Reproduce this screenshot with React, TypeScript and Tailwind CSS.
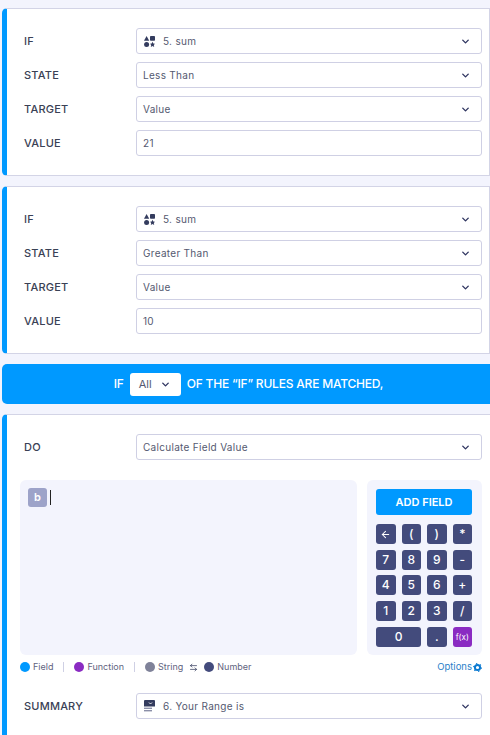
import { ChevronDown, ArrowLeft, ArrowLeftRight } from "lucide-react";

const Chevron = () => <ChevronDown className="w-[11px] h-[11px] text-[#2f3560]" strokeWidth={3} />;

const ShapesIcon = () => (
  <svg width="11" height="11" viewBox="0 0 11 11" className="shrink-0 ml-px" fill="#343c5e">
    <path d="M2.6 0 L5.2 4.8 H0 Z" />
    <rect x="6" y="0" width="5" height="4.8" rx="0.8" />
    <circle cx="2.6" cy="8.4" r="2.5" />
    <path d="M8.5 5.7 L9.3 7.5 L11 7.7 L9.8 9 L10.2 11 L8.5 10 L6.8 11 L7.2 9 L6 7.7 L7.7 7.5 Z" />
  </svg>
);

const SummaryIcon = () => (
  <svg width="11" height="12" viewBox="0 0 11 12" className="shrink-0 ml-px" fill="#343c5e">
    <path d="M1 0 H10 a1 1 0 0 1 1 1 V6.5 H0 V1 a1 1 0 0 1 1 -1 Z" />
    <path d="M5 2.5 L6.5 4 L8 2.5" stroke="#fff" strokeWidth="0.9" fill="none" />
    <rect x="0" y="7.6" width="8" height="1.4" fill="#8b8fa8" />
    <rect x="0" y="10" width="8" height="1.4" fill="#8b8fa8" />
  </svg>
);

const Row = ({ label, value, icon, select = true }: { label: string; value: string; icon?: React.ReactNode; select?: boolean }) => (
  <div className="flex items-center">
    <div className="w-[112px] text-[11px] font-medium text-[#3a4155] tracking-[0.2px]">{label}</div>
    <div className="flex-1 h-[26px] bg-white border border-[#cfd0e4] rounded-[3px] flex items-center justify-between pl-[6px] pr-[10px]">
      <div className="flex items-center gap-[8px] text-[10px] text-[#545970] tracking-[0.3px]">
        {icon}
        <span>{value}</span>
      </div>
      {select && <Chevron />}
    </div>
  </div>
);

const Condition = ({ state, value }: { state: string; value: string }) => (
  <div className="bg-white border-y border-r border-[#d3d4e6] border-l-[5px] border-l-[#0099ff] rounded-l-[5px] pl-[17px] pr-[7px] py-[19px] flex flex-col gap-[8px]">
    <Row label="IF" value="5. sum" icon={<ShapesIcon />} />
    <Row label="STATE" value={state} />
    <Row label="TARGET" value="Value" />
    <Row label="VALUE" value={value} select={false} />
  </div>
);

const Key = ({ children, className = "bg-[#434b7c] text-[12px] font-medium" }: { children: React.ReactNode; className?: string }) => (
  <div className={`h-[20px] rounded-[3px] text-white flex items-center justify-center ${className}`}>
    {children}
  </div>
);

const Legend = ({ color, label }: { color: string; label: string }) => (
  <div className="flex items-center gap-[3px]">
    <span className={`w-[10px] h-[10px] rounded-full ${color}`} />
    <span>{label}</span>
  </div>
);

export default function App() {
  return (
    <div className="w-[490px] h-[735px] overflow-hidden bg-[#f3f4fd] pl-[2px] pt-[8px] flex flex-col gap-[10px]" style={{ fontFamily: "Inter, 'Noto Sans', sans-serif" }}>
      <Condition state="Less Than" value="21" />
      <Condition state="Greater Than" value="10" />

      <div className="shrink-0 h-[40px] bg-[#0099ff] rounded-l-[5px] flex items-center justify-center gap-[6px] pl-[5px] text-white text-[12px] font-medium tracking-[-0.2px]">
        <span>IF</span>
        <div className="w-[51px] h-[23px] bg-white rounded-[3px] flex items-center justify-between pl-[9px] pr-[10px] text-[11px] text-[#545970] font-normal tracking-normal">
          <span>All</span>
          <Chevron />
        </div>
        <span>OF THE “IF” RULES ARE MATCHED,</span>
      </div>

      <div className="shrink-0 bg-white border-t border-[#d3d4e6] border-l-[5px] border-l-[#0099ff] rounded-tl-[5px] pl-[13px] pr-[8px] pt-[19px] h-[340px]">
        <div className="pl-[4px]">
          <Row label="DO" value="Calculate Field Value" />
        </div>

        <div className="flex gap-[10px] mt-[20px]">
          <div className="w-[337px] h-[175px] bg-[#f3f4fd] rounded-[6px] p-[8px] flex items-start gap-[3px]">
            <div className="w-[19px] h-[19px] rounded-[3px] bg-[#9da3c9] text-white text-[11px] font-semibold flex items-center justify-center">b</div>
            <div className="w-px h-[15px] bg-[#222] mt-[2px]" />
          </div>

          <div className="w-[115px] h-[175px] bg-[#f3f4fd] rounded-[6px] pl-[9px] pr-[10px] pt-[9px]">
            <div className="h-[26px] rounded-[3px] bg-[#0099ff] text-white text-[11px] font-semibold flex items-center justify-center">ADD FIELD</div>
            <div className="grid grid-cols-4 gap-x-[6px] gap-y-[5.7px] mt-[9px]">
              <Key><ArrowLeft className="w-[11px] h-[11px]" strokeWidth={2.2} /></Key>
              <Key>(</Key>
              <Key>)</Key>
              <Key>*</Key>
              <Key>7</Key>
              <Key>8</Key>
              <Key>9</Key>
              <Key>-</Key>
              <Key>4</Key>
              <Key>5</Key>
              <Key>6</Key>
              <Key>+</Key>
              <Key>1</Key>
              <Key>2</Key>
              <Key>3</Key>
              <Key>/</Key>
              <Key className="col-span-2 bg-[#434b7c] text-[12px] font-medium">0</Key>
              <Key>.</Key>
              <Key className="bg-[#8a2bc2] text-[8px] font-normal">f(x)</Key>
            </div>
          </div>
        </div>

        <div className="flex items-center justify-between mt-[5px] text-[9px] text-[#5f6480]">
          <div className="flex items-center">
            <Legend color="bg-[#0099ff]" label="Field" />
            <span className="w-px h-[10px] bg-[#cfd0e4] mx-[10px]" />
            <Legend color="bg-[#8a2bc2]" label="Function" />
            <span className="w-px h-[10px] bg-[#cfd0e4] mx-[10px]" />
            <Legend color="bg-[#7f8299]" label="String" />
            <ArrowLeftRight className="w-[9px] h-[9px] mx-[6px] text-[#343c5e]" strokeWidth={2} />
            <Legend color="bg-[#434b7c]" label="Number" />
          </div>
          <div className="flex items-center gap-[1px] text-[9.5px] text-[#2a7fc9]">
            <span>Options</span>
            <svg width="9" height="9" viewBox="0 0 9 9" fill="none">
              <circle cx="4.5" cy="4.5" r="2.6" stroke="#0b7ad1" strokeWidth="2" />
              <circle cx="4.5" cy="4.5" r="3.9" stroke="#0b7ad1" strokeWidth="1.1" strokeDasharray="1.3 2.8" />
            </svg>
          </div>
        </div>

        <div className="pl-[4px] mt-[19px]">
          <Row label="SUMMARY" value="6. Your Range is" icon={<SummaryIcon />} />
        </div>
      </div>
    </div>
  );
}
